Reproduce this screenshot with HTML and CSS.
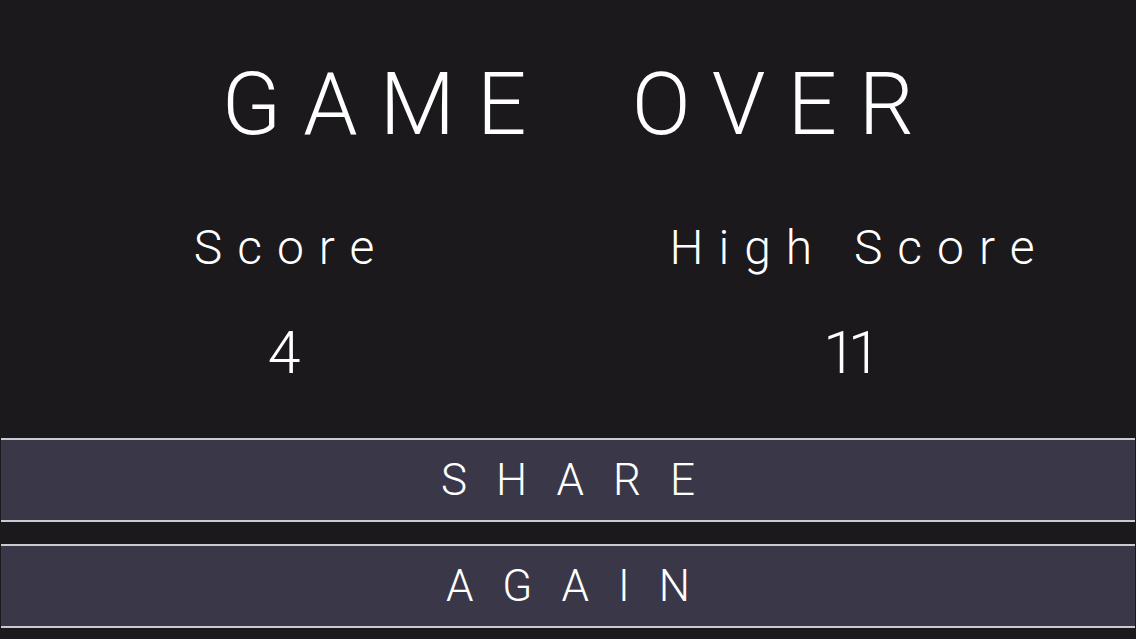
FILE: index.html
```html
<!DOCTYPE html>
<html>
<head>
    <title>Game Over</title>
    <link rel="stylesheet" href="styles.css">
</head>
<body>
    <div class="screen">
        <h1 class="title">GAME OVER</h1>

        <div class="scores">
            <div class="score-col">
                <span class="label">Score</span>
                <span class="value">4</span>
            </div>
            <div class="score-col">
                <span class="label">High Score</span>
                <span class="value">11</span>
            </div>
        </div>

        <div class="buttons">
            <button class="menubtn">SHARE</button>
            <button class="menubtn">AGAIN</button>
        </div>
    </div>
</body>
</html>
```

FILE: styles.css
```css
body {
    margin: 0;
    background-color: #1b191c;
    color: #ffffff;
    font-family: Roboto, "Liberation Sans", sans-serif;
    font-weight: 300;
}

.screen {
    width: 1136px;
    height: 639px;
    overflow: hidden;
}

.title {
    margin: 61px 0 0 0;
    font-size: 87px;
    font-weight: 300;
    line-height: 1;
    text-align: center;
    letter-spacing: 22px;
    word-spacing: 40px;
    padding-left: 22px;
}

.scores {
    display: flex;
    margin-top: 76px;
}

.score-col {
    flex: 1;
    display: flex;
    flex-direction: column;
    align-items: center;
}

.label {
    font-size: 48px;
    line-height: 1;
    letter-spacing: 15px;
    padding-left: 15px;
}

.value {
    margin-top: 51px;
    font-size: 59px;
    line-height: 1;
    letter-spacing: -8px;
    padding-right: 8px;
}

.buttons {
    margin-top: 56px;
    display: flex;
    flex-direction: column;
    gap: 22px;
}

.menubtn {
    display: flex;
    align-items: center;
    justify-content: center;
    height: 84px;
    margin: 0 1px;
    padding: 0 0 0 29px;
    background-color: #3a3848;
    border: none;
    border-top: 2px solid #cbcacf;
    border-bottom: 2px solid #cbcacf;
    color: #ffffff;
    font-family: Roboto, "Liberation Sans", sans-serif;
    font-weight: 300;
    font-size: 44px;
    line-height: 1;
    letter-spacing: 29px;
    cursor: pointer;
}
```
